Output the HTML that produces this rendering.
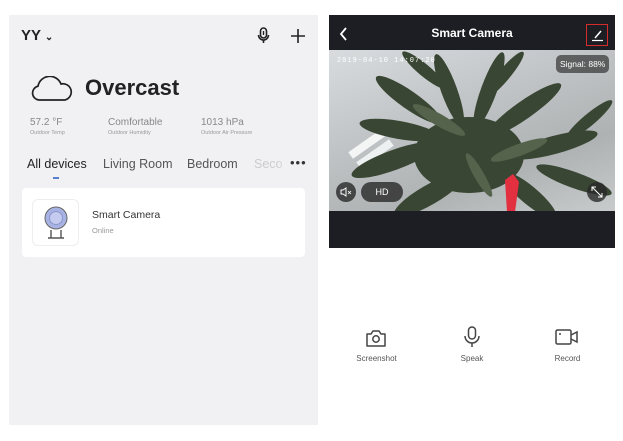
<!DOCTYPE html>
<html><head><meta charset="utf-8"><style>
*{margin:0;padding:0;box-sizing:border-box}
body{width:623px;height:441px;background:#fff;position:relative;overflow:hidden;font-family:"Liberation Sans",sans-serif;color:#222}
.a{position:absolute}
#L{left:9px;top:15px;width:309px;height:410px;background:#f1f1f3}
#R{left:329px;top:15px;width:286px;height:410px;background:#fff}
.t{white-space:nowrap}
</style></head><body>
<div id="L" class="a">
  <div class="a t" style="left:12px;top:12px;font-size:15px;font-weight:bold;color:#222">YY <span style="font-size:10px">&#8964;</span></div>
  <svg class="a" style="left:248px;top:12px" width="14" height="18" viewBox="0 0 14 18"><rect x="3.5" y="1" width="6" height="10" rx="3" fill="none" stroke="#222" stroke-width="1.6"/><path d="M1.5 8a5 5 0 0 0 10 0M6.5 13v3" fill="none" stroke="#222" stroke-width="1.6"/><path d="M6.5 4v4" stroke="#222" stroke-width="1.4"/></svg>
  <svg class="a" style="left:281px;top:13px" width="16" height="16"><path d="M8 1v14M1 8h14" stroke="#222" stroke-width="1.6"/></svg>
  <svg class="a" style="left:21px;top:61px" width="44" height="26" viewBox="0 0 44 26"><path d="M9 24a7 7 0 0 1-1-13.8A12 12 0 0 1 31 8a8 8 0 0 1 4 16z" fill="none" stroke="#222" stroke-width="1.7"/></svg>
  <div class="a t" style="left:76px;top:60px;font-size:22px;font-weight:bold;color:#222">Overcast</div>
  <div class="a t" style="left:21px;top:102px;font-size:10px;color:#888">57.2 °F</div>
  <div class="a t" style="left:21px;top:115px;font-size:5.5px;color:#999">Outdoor Temp</div>
  <div class="a t" style="left:99px;top:102px;font-size:10px;color:#888">Comfortable</div>
  <div class="a t" style="left:99px;top:115px;font-size:5.5px;color:#999">Outdoor Humidity</div>
  <div class="a t" style="left:192px;top:102px;font-size:10px;color:#888">1013 hPa</div>
  <div class="a t" style="left:192px;top:115px;font-size:5.5px;color:#999">Outdoor Air Pressure</div>
  <div class="a t" style="left:18px;top:142px;font-size:12.5px;color:#222">All devices</div>
  <div class="a" style="left:44px;top:162px;width:6px;height:2px;background:#5a7fd0"></div>
  <div class="a t" style="left:94px;top:142px;font-size:12.5px;color:#555">Living Room</div>
  <div class="a t" style="left:178px;top:142px;font-size:12.5px;color:#555">Bedroom</div>
  <div class="a t" style="left:245px;top:142px;font-size:12.5px;color:#ccc">Seco</div>
  <div class="a" style="left:268px;top:138px;width:15px;height:22px;background:linear-gradient(90deg,rgba(241,241,243,0),#f1f1f3)"></div>
  <div class="a t" style="left:281px;top:140px;font-size:13px;color:#333;letter-spacing:1px">&bull;&bull;&bull;</div>
  <div class="a" style="left:13px;top:173px;width:283px;height:69px;background:#fff;border-radius:4px"></div>
  <div class="a" style="left:23px;top:184px;width:47px;height:47px;background:#fff;border:1px solid #eee;border-radius:6px"></div>
  <svg class="a" style="left:34px;top:190px" width="26" height="36" viewBox="0 0 26 36"><circle cx="13" cy="13" r="11" fill="#a9b3e3" stroke="#666" stroke-width="1"/><circle cx="13" cy="13" r="6.5" fill="#c5cbee" stroke="#8b96cf" stroke-width="1"/><path d="M8 25v8M18 25v8M5 33h16" stroke="#555" stroke-width="1.4" fill="none"/></svg>
  <div class="a t" style="left:83px;top:194px;font-size:10.5px;color:#333">Smart Camera</div>
  <div class="a t" style="left:83px;top:211px;font-size:7.5px;color:#999">Online</div>
</div>
<div id="R" class="a">
  <div class="a" style="left:0;top:0;width:286px;height:35px;background:#1d1e24"></div>
  <svg class="a" style="left:10px;top:12px" width="10" height="14"><path d="M7 1L2 7l5 6" fill="none" stroke="#fff" stroke-width="1.8"/></svg>
  <div class="a t" style="left:0;width:286px;text-align:center;top:11px;font-size:12px;font-weight:bold;color:#fff">Smart Camera</div>
  <div class="a" style="left:257px;top:9px;width:22px;height:22px;border:1.5px solid #d42b2b"></div>
  <svg class="a" style="left:261px;top:13px" width="14" height="14"><path d="M5 10L11 3" stroke="#fff" stroke-width="1.5"/><path d="M2 12.5h11" stroke="#fff" stroke-width="1.2"/></svg>
  <div class="a" style="left:0;top:35px;width:286px;height:161px;overflow:hidden;background:linear-gradient(160deg,#d9dcde 0%,#bfc3c5 40%,#aeb2b3 70%,#c8cbcc 100%)">
    <div class="a" style="left:18px;top:90px;width:40px;height:8px;background:#f4f6f6;transform:rotate(-35deg)"></div>
    <div class="a" style="left:26px;top:100px;width:40px;height:8px;background:#eef1f1;transform:rotate(-35deg)"></div>
    <svg class="a" style="left:0;top:0" width="286" height="161" viewBox="0 0 286 161">
      <g fill="#3a4634">
        <ellipse cx="80" cy="50" rx="40" ry="9" transform="rotate(35 80 50)"/>
        <ellipse cx="120" cy="40" rx="38" ry="8" transform="rotate(70 120 40)"/>
        <ellipse cx="160" cy="40" rx="40" ry="8" transform="rotate(-70 160 40)"/>
        <ellipse cx="195" cy="60" rx="45" ry="9" transform="rotate(-35 195 60)"/>
        <ellipse cx="225" cy="95" rx="45" ry="9" transform="rotate(-15 225 95)"/>
        <ellipse cx="245" cy="130" rx="40" ry="8" transform="rotate(20 245 130)"/>
        <ellipse cx="65" cy="110" rx="45" ry="10" transform="rotate(-20 65 110)"/>
        <ellipse cx="70" cy="80" rx="40" ry="9" transform="rotate(10 70 80)"/>
        <ellipse cx="140" cy="105" rx="55" ry="38"/>
        <ellipse cx="100" cy="145" rx="40" ry="10" transform="rotate(-30 100 145)"/>
        <ellipse cx="200" cy="145" rx="35" ry="9" transform="rotate(40 200 145)"/>
        <ellipse cx="175" cy="25" rx="30" ry="6" transform="rotate(-50 175 25)"/>
        <ellipse cx="95" cy="20" rx="28" ry="6" transform="rotate(40 95 20)"/>
        <ellipse cx="260" cy="70" rx="30" ry="6" transform="rotate(-40 260 70)"/>
      </g>
      <g fill="#55634c">
        <ellipse cx="110" cy="70" rx="30" ry="6" transform="rotate(30 110 70)"/>
        <ellipse cx="190" cy="100" rx="30" ry="6" transform="rotate(-20 190 100)"/>
        <ellipse cx="150" cy="125" rx="25" ry="5" transform="rotate(60 150 125)"/>
      </g>
      <path d="M176 130l8 -6 6 8 -4 30h-8z" fill="#e23040"/>
    </svg>
    <div class="a t" style="left:8px;top:7px;font-size:7px;color:#fff;letter-spacing:1px;font-family:'Liberation Mono',monospace">2019-04-10 14:07:20</div>
    <div class="a t" style="left:227px;top:5px;padding:4px 4px;background:rgba(60,60,60,.75);border-radius:5px;font-size:8.5px;color:#fff">Signal: 88%</div>
    <div class="a" style="left:7px;top:132px;width:20px;height:20px;border-radius:50%;background:rgba(40,40,40,.8)"></div>
    <svg class="a" style="left:11px;top:137px" width="12" height="10"><path d="M1 3h2l3-2v8l-3-2H1z" fill="none" stroke="#fff" stroke-width="1"/><path d="M8 4l3 3M11 4l-3 3" stroke="#fff" stroke-width="0.8"/></svg>
    <div class="a t" style="left:32px;top:132px;width:42px;height:20px;border-radius:10px;background:rgba(40,40,40,.8);color:#fff;font-size:9px;text-align:center;line-height:20px">HD</div>
    <div class="a" style="left:258px;top:132px;width:20px;height:20px;border-radius:50%;background:rgba(40,40,40,.8)"></div>
    <svg class="a" style="left:262px;top:136px" width="12" height="12"><path d="M1 5V1h4M7 11h4V7M1 1l10 10" fill="none" stroke="#fff" stroke-width="1"/></svg>
  </div>
  <div class="a" style="left:0;top:196px;width:286px;height:37px;background:#1d1e24"></div>
  <svg class="a" style="left:36px;top:314px" width="22" height="18" viewBox="0 0 22 18"><path d="M2 5h4l2-3h6l2 3h4v12H2z" fill="none" stroke="#444" stroke-width="1.5" stroke-linejoin="round"/><circle cx="11" cy="10" r="3.2" fill="none" stroke="#444" stroke-width="1.5"/></svg>
  <div class="a t" style="left:0;width:95px;text-align:center;top:339px;font-size:8px;color:#555">Screenshot</div>
  <svg class="a" style="left:134px;top:311px" width="18" height="22" viewBox="0 0 18 22"><rect x="5.5" y="1" width="7" height="12" rx="3.5" fill="none" stroke="#444" stroke-width="1.5"/><path d="M2 10a7 7 0 0 0 14 0M9 17v4" fill="none" stroke="#444" stroke-width="1.5"/></svg>
  <div class="a t" style="left:95px;width:96px;text-align:center;top:339px;font-size:8px;color:#555">Speak</div>
  <svg class="a" style="left:226px;top:314px" width="24" height="16" viewBox="0 0 24 16"><rect x="1" y="1" width="15" height="14" rx="1.5" fill="none" stroke="#444" stroke-width="1.5"/><path d="M16 6l6-3v10l-6-3" fill="none" stroke="#444" stroke-width="1.5"/><circle cx="5" cy="5" r="1" fill="#444"/></svg>
  <div class="a t" style="left:191px;width:95px;text-align:center;top:339px;font-size:8px;color:#555">Record</div>
</div>
</body></html>
